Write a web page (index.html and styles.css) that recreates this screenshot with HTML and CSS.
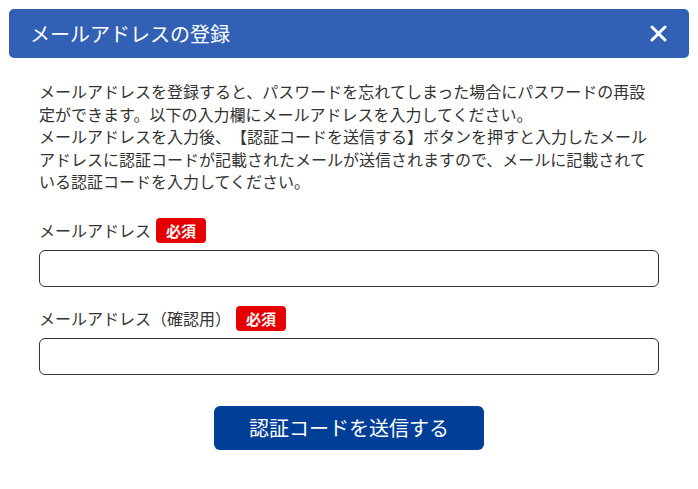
FILE: index.html
```html
<!DOCTYPE html>
<html lang="ja">
<head>
    <meta charset="utf-8">
    <title>メールアドレスの登録</title>
    <link rel="stylesheet" href="styles.css">
</head>
<body>

    <div class="dialog">
        <div class="dialog-header">
            <h1>メールアドレスの登録</h1>
            <button type="button" class="close" aria-label="閉じる">
                <svg width="17" height="17" viewBox="0 0 17 17">
                    <path d="M2 2 L15 15 M15 2 L2 15" stroke="#fff" stroke-width="3" stroke-linecap="round"/>
                </svg>
            </button>
        </div>

        <form class="dialog-body" onsubmit="return false">
            <p class="lead">メールアドレスを登録すると、パスワードを忘れてしまった場合にパスワードの再設定ができます。以下の入力欄にメールアドレスを入力してください。<br>メールアドレスを入力後、【認証コードを送信する】ボタンを押すと入力したメールアドレスに認証コードが記載されたメールが送信されますので、メールに記載されている認証コードを入力してください。</p>

            <label for="email">メールアドレス<span class="required">必須</span></label>
            <input type="text" id="email" name="email">

            <label for="email2">メールアドレス（確認用）<span class="required">必須</span></label>
            <input type="text" id="email2" name="email2">

            <div class="actions">
                <button type="submit" class="submit">認証コードを送信する</button>
            </div>
        </form>
    </div>

</body>
</html>
```

FILE: styles.css
```css
body {
    margin: 0;
    background: #fff;
    color: #333;
    font-family: "Noto Sans CJK JP", "Noto Sans", sans-serif;
    text-spacing-trim: space-all;
}
.dialog {
    padding: 9px 9px 0;
}
.dialog-header {
    background: #3160b5;
    border-radius: 5px;
    height: 49px;
    display: flex;
    align-items: center;
    justify-content: space-between;
    padding: 0 22px 0 21px;
}
.dialog-header h1 {
    margin: 0;
    color: #fff;
    font-size: 20px;
    font-weight: normal;
    line-height: 1;
}
.close {
    background: none;
    border: none;
    padding: 0;
    width: 17px;
    height: 17px;
    cursor: pointer;
}
.close svg {
    display: block;
}
.dialog-body {
    padding: 0 30px;
}
.lead {
    margin: 22px 0 25px;
    font-size: 16px;
    line-height: 22.6px;
}
label {
    display: flex;
    align-items: center;
    font-size: 16px;
    line-height: 25px;
    margin-top: 19px;
    margin-bottom: 7px;
}
.required {
    background: #e60000;
    color: #fff;
    font-size: 15px;
    font-weight: bold;
    line-height: 25px;
    padding: 0 10px;
    border-radius: 4px;
    margin-left: 5px;
}
input {
    display: block;
    box-sizing: border-box;
    width: 100%;
    height: 37px;
    border: 1px solid #333;
    border-radius: 6px;
    padding: 0 10px;
    font-size: 16px;
}
.actions {
    text-align: center;
    margin-top: 31px;
}
.submit {
    background: #003e98;
    color: #fff;
    border: none;
    border-radius: 6px;
    width: 270px;
    height: 44px;
    font-family: inherit;
    font-size: 20px;
    cursor: pointer;
}
.submit:hover {
    background: #00307a;
}
```
